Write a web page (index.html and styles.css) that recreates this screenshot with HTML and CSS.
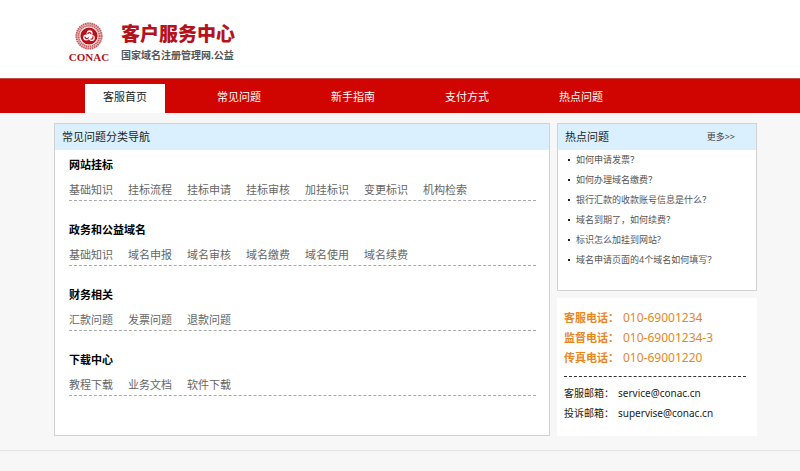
FILE: index.html
```html
<!DOCTYPE html>
<html lang="zh-CN">
<head>
  <meta charset="UTF-8" />
  <meta name="viewport" content="width=device-width, initial-scale=1.0"/>
  <title>客户服务中心</title>
  <link rel="stylesheet" href="styles.css">
</head>
<body>
<header class="header">
  <a class="logo" href="#">
    <svg class="emblem" viewBox="0 0 28 28" aria-hidden="true">
      <circle class="ring-bg" cx="14" cy="14" r="11.3"/>
      <circle class="ring-outer" cx="14" cy="14" r="12.6"/>
      <circle class="ring-inner" cx="14" cy="14" r="10.4"/>
      <circle class="disc" cx="14" cy="14" r="8.6"/>
      <circle class="swirl" cx="14.600" cy="11.200" r="3"/>
      <circle class="swirl" cx="11.200" cy="15.400" r="3"/>
      <circle class="swirl" cx="16.800" cy="16" r="3"/>
      <path class="swirl-cut" d="M12.800 11.600c.8-1.400 2.700-1.300 3.200.2M10 15.200c.4 1.500 2.400 1.900 3.300.5M17.900 14.800c.5 1.400-.5 2.500-2 2.200"/>
    </svg>
    <span class="logo-name">CONAC</span>
  </a>
  <div class="site-title">
    <h1>客户服务中心</h1>
    <p>国家域名注册管理网.公益</p>
  </div>
</header>

<nav class="nav">
  <a class="active" href="#">客服首页</a>
  <a href="#changjian">常见问题</a>
  <a href="#xinshou">新手指南</a>
  <a href="#zhifu">支付方式</a>
  <a href="#redian">热点问题</a>
</nav>

<main class="main">
  <section class="box category" id="changjian">
    <div class="box-head">
      <h2>常见问题分类导航</h2>
    </div>
    <div class="groups">
      <div class="group">
        <h3>网站挂标</h3>
        <div class="links">
          <a href="#">基础知识</a>
          <a href="#">挂标流程</a>
          <a href="#">挂标申请</a>
          <a href="#">挂标审核</a>
          <a href="#">加挂标识</a>
          <a href="#">变更标识</a>
          <a href="#">机构检索</a>
        </div>
      </div>
      <div class="group">
        <h3>政务和公益域名</h3>
        <div class="links">
          <a href="#">基础知识</a>
          <a href="#">域名申报</a>
          <a href="#">域名审核</a>
          <a href="#">域名缴费</a>
          <a href="#">域名使用</a>
          <a href="#">域名续费</a>
        </div>
      </div>
      <div class="group">
        <h3>财务相关</h3>
        <div class="links">
          <a href="#">汇款问题</a>
          <a href="#">发票问题</a>
          <a href="#">退款问题</a>
        </div>
      </div>
      <div class="group">
        <h3>下载中心</h3>
        <div class="links">
          <a href="#">教程下载</a>
          <a href="#">业务文档</a>
          <a href="#">软件下载</a>
        </div>
      </div>
    </div>
  </section>

  <aside class="side">
    <section class="box" id="redian">
      <div class="box-head">
        <h2>热点问题</h2>
        <a class="more" href="#">更多&gt;&gt;</a>
      </div>
      <ul class="hot">
        <li><a href="#">如何申请发票？</a></li>
        <li><a href="#">如何办理域名缴费？</a></li>
        <li><a href="#">银行汇款的收款账号信息是什么？</a></li>
        <li><a href="#">域名到期了，如何续费？</a></li>
        <li><a href="#">标识怎么加挂到网站?</a></li>
        <li><a href="#">域名申请页面的4个域名如何填写？</a></li>
      </ul>
    </section>

    <section class="contact">
      <p class="phone"><strong>客服电话：</strong><span>010-69001234</span></p>
      <p class="phone"><strong>监督电话：</strong><span>010-69001234-3</span></p>
      <p class="phone"><strong>传真电话：</strong><span>010-69001220</span></p>
      <hr>
      <p class="mail"><span>客服邮箱：</span><a href="mailto:service@conac.cn">service@conac.cn</a></p>
      <p class="mail"><span>投诉邮箱：</span><a href="mailto:supervise@conac.cn">supervise@conac.cn</a></p>
    </section>
  </aside>
</main>

<footer class="footer"></footer>
</body>
</html>
```

FILE: styles.css
```css
* { box-sizing: border-box; }
body { font-family: "Noto Sans", "Noto Sans CJK SC", sans-serif; font-size: 11px; line-height: 20px; margin: 0; background: #f7f7f7; color: #222; }
h1, h2, h3, p, ul { margin: 0; padding: 0; }
a { color: inherit; text-decoration: none; }
a:hover { text-decoration: underline; }

.header { display: flex; align-items: center; gap: 12px; background: white; padding: 22px 43px 14px 69px; }
.logo { display: flex; flex-direction: column; align-items: center; width: 40px; }
.logo:hover { text-decoration: none; }
.emblem { width: 28px; height: 28px; }
.ring-bg { fill: none; stroke: #f0c9c9; stroke-width: 4; }
.ring-outer { fill: none; stroke: #c4555a; stroke-width: 2; stroke-dasharray: 1.4 0.8; }
.ring-inner { fill: none; stroke: #c4555a; stroke-width: 1.6; stroke-dasharray: 1.2 0.8; }
.disc { fill: #b5121b; }
.swirl { fill: white; }
.swirl-cut { fill: none; stroke: #b5121b; stroke-width: 1.2; stroke-linecap: round; }
.logo-name { font-family: "Liberation Serif", serif; font-size: 11px; line-height: 14px; font-weight: bold; color: #b5121b; }
.site-title h1 { font-size: 19px; line-height: 24px; font-weight: 900; color: #b5121b; }
.site-title p { font-size: 10px; line-height: 18px; font-weight: bold; color: #555; }

.nav { display: flex; gap: 34px; background: #d00400; border-top: 1px solid #c84a48; padding: 5px 43px 0 85px; }
.nav a { color: white; padding: 0 18px; height: 29px; line-height: 25px; }
.nav .active { background: white; color: #222; }

.main { display: flex; gap: 7px; padding: 10px 43px 14px 54px; }
.box { background: white; border: 1px solid #d2d2d2; }
.box-head { display: flex; justify-content: space-between; align-items: center; height: 26px; padding: 0 21px 0 7px; background: #daf0fe; }
.box-head h2 { font-size: 11px; font-weight: normal; }
.more { font-size: 9px; color: #444; }

.category { flex: 1; }
.groups { padding: 5px 13px 19px 14px; }
.group { border-bottom: 1px dashed #aaa; margin-bottom: 19px; }
.group h3 { font-size: 11px; font-weight: bold; color: #000; }
.links { display: flex; flex-wrap: wrap; gap: 0 15px; padding-top: 4px; line-height: 21px; color: #666; }

.side { display: flex; flex-direction: column; gap: 7px; width: 200px; }
.hot { list-style: none; padding: 0 10px 20px; font-size: 9px; color: #555; }
.hot li { display: flex; align-items: center; gap: 6px; }
.hot li::before { content: ""; width: 2px; height: 2px; background: #222; }

.contact { flex: 1; background: white; padding: 10px 11px 13px 7px; }
.contact p { display: flex; gap: 4px; }
.phone { color: #e8871e; }
.phone span { font-size: 12px; }
.contact hr { border: 0; border-top: 1px dashed #333; margin: 8px 0 6px; }
.mail { font-size: 10px; }

.footer { border-top: 1px solid #e3e3e3; height: 20px; }
```
